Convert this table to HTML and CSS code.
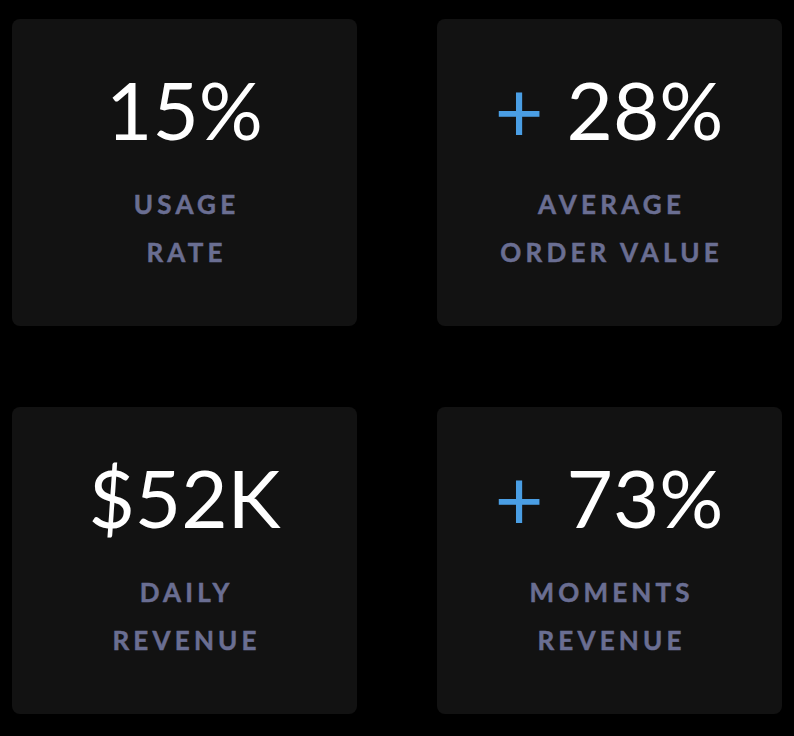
FILE: index.html
```html
<!DOCTYPE html>
<html lang="en">
<head>
<meta charset="utf-8">
<title>Stats</title>
<link rel="stylesheet" href="styles.css">
</head>
<body>
<main class="grid">
  <section class="card">
    <div class="value">15%</div>
    <div class="label">USAGE<br>RATE</div>
  </section>
  <section class="card">
    <div class="value"><span class="plus">+</span> 28%</div>
    <div class="label">AVERAGE<br>ORDER VALUE</div>
  </section>
  <section class="card">
    <div class="value">$52K</div>
    <div class="label">DAILY<br>REVENUE</div>
  </section>
  <section class="card">
    <div class="value"><span class="plus">+</span> 73%</div>
    <div class="label">MOMENTS<br>REVENUE</div>
  </section>
</main>
</body>
</html>
```

FILE: styles.css
```css
html, body {
  margin: 0;
  background: #000;
}
body {
  padding: 19px 12px 21px;
  font-family: "Lato", "Open Sans", sans-serif;
}
.grid {
  display: grid;
  grid-template-columns: 345px 345px;
  grid-template-rows: 307px 307px;
  column-gap: 80px;
  row-gap: 81px;
}
.card {
  background: #121212;
  border-radius: 8px;
  display: flex;
  flex-direction: column;
  align-items: center;
  padding-top: 50px;
  box-sizing: border-box;
}
.value {
  color: #fff;
  font-size: 80px;
  line-height: 80px;
  font-weight: 400;
  white-space: nowrap;
}
.plus {
  display: inline-block;
  color: #4a9ee4;
  margin-right: 4px;
  transform: scale(1.06);
}
.label {
  margin-top: 31px;
  color: #6a6e92;
  font-size: 26px;
  line-height: 48px;
  font-weight: 700;
  letter-spacing: 4.2px;
  text-align: center;
  padding-left: 4.2px;
  -webkit-text-stroke: 0.5px #6a6e92;
}
```
